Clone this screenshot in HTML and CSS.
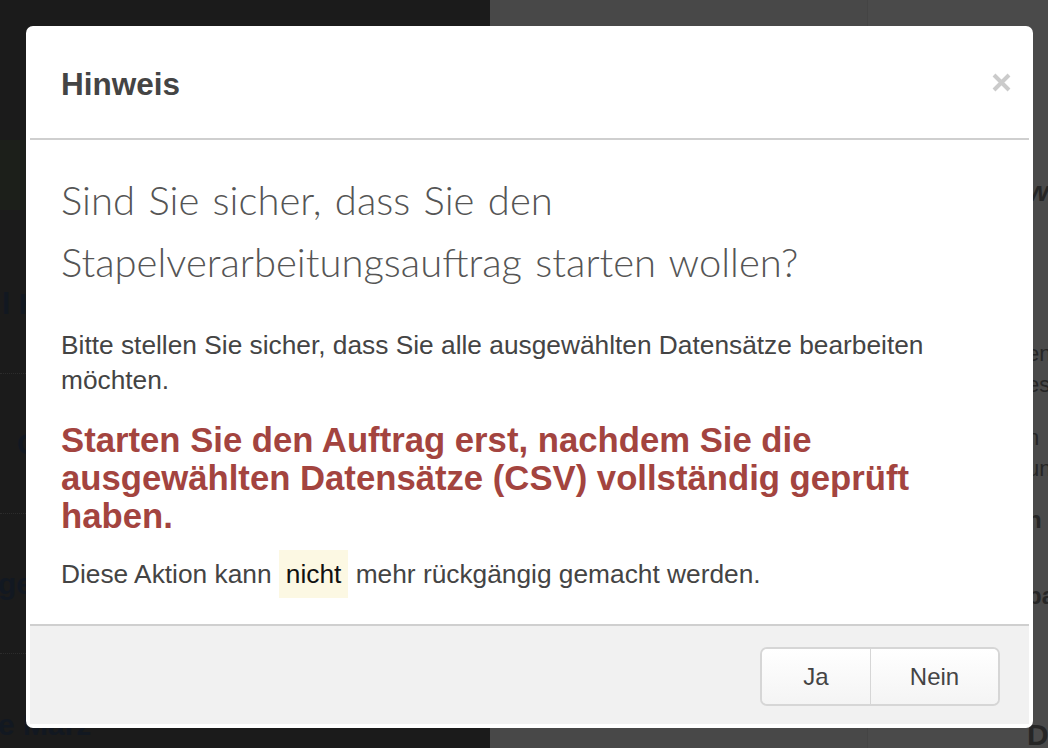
FILE: index.html
```html
<!DOCTYPE html>
<html lang="de">
<head>
    <meta charset="UTF-8">
    <meta name="viewport" content="width=device-width, initial-scale=1.0">
    <title>Hinweis</title>
    <link rel="stylesheet" href="styles.css">
</head>
<body>
    <div class="page">
        <div class="col-left">
            <div class="alert-strip"></div>
            <div class="list-row"><span class="shift-a">l Hinweise</span></div>
            <div class="list-row"><span class="shift-b">Gruppen</span></div>
            <div class="list-row"><span class="shift-c">gemeldet</span></div>
            <div class="list-row last"><span class="shift-c">e März</span></div>
        </div>
        <div class="col-mid"></div>
        <div class="col-right">
            <div class="side-title">wichtig</div>
            <div class="side-text">ende<br>estellt</div>
            <div class="side-text">n<br>und</div>
            <div class="side-bold">n l</div>
            <div class="side-bold tall">pa</div>
            <div class="side-big">Daten</div>
        </div>
    </div>

    <div class="backdrop">
        <div class="modal">
            <div class="modal-header">
                <h4 class="modal-title">Hinweis</h4>
                <button class="close" type="button" aria-label="Schließen">
                    <svg width="19" height="19" viewBox="0 0 19 19">
                        <path d="M2 2 L17 17 M17 2 L2 17" stroke="#cbcbcb" stroke-width="4"/>
                    </svg>
                </button>
            </div>
            <div class="modal-body">
                <h3 class="lead-question">Sind Sie sicher, dass Sie den Stapelverarbeitungsauftrag starten wollen?</h3>
                <p>Bitte stellen Sie sicher, dass Sie alle ausgewählten Datensätze bearbeiten möchten.</p>
                <p class="danger">Starten Sie den Auftrag erst, nachdem Sie die ausgewählten Datensätze (CSV) vollständig geprüft haben.</p>
                <p>Diese Aktion kann <mark>nicht</mark> mehr rückgängig gemacht werden.</p>
            </div>
            <div class="modal-footer">
                <div class="btn-group">
                    <button class="btn" type="button">Ja</button>
                    <button class="btn" type="button">Nein</button>
                </div>
            </div>
        </div>
    </div>
</body>
</html>
```

FILE: styles.css
```css
html, body {
    margin: 0;
    padding: 0;
    height: 100%;
    overflow: hidden;
}
body {
    font-family: "Liberation Sans", Arial, sans-serif;
    color: #444;
    background-color: #1b1b1b;
}

/* page behind the overlay */
.page {
    display: grid;
    grid-template-columns: 490px 377px 1fr;
    height: 748px;
}
.col-left {
    background-color: #1b1b1b;
    overflow: hidden;
    padding-top: 140px;
}
.alert-strip {
    height: 70px;
    background-color: #1c1f1a;
    margin-bottom: 24px;
}
.list-row {
    height: 139px;
    border-bottom: 1px dotted #2c2c2c;
    display: flex;
    align-items: center;
    font-size: 30px;
    font-weight: bold;
    color: #121821;
    white-space: nowrap;
}
.list-row.last {
    border-bottom: none;
    align-items: flex-start;
    padding-top: 54px;
}
.shift-a { margin-left: 2px; }
.shift-b { margin-left: 17px; }
.shift-c { margin-left: -2px; }
.col-mid {
    background-color: #484848;
}
.col-right {
    background-color: #4a4a4a;
    border-left: 1px solid #444;
    padding-left: 159px;
    padding-top: 176px;
    overflow: hidden;
    white-space: nowrap;
    color: #262626;
}
.side-title {
    font-size: 28px;
    font-weight: bold;
    font-style: italic;
    height: 162px;
}
.side-text {
    font-size: 22px;
    line-height: 31px;
    height: 84px;
}
.side-bold {
    font-size: 24px;
    font-weight: bold;
    height: 76px;
}
.side-bold.tall {
    height: 136px;
}
.side-big {
    font-size: 30px;
    font-weight: bold;
}

/* modal */
.backdrop {
    position: absolute;
    top: 0;
    left: 0;
    right: 0;
    bottom: 0;
}
.modal {
    position: absolute;
    top: 26px;
    left: 26px;
    width: 1007px;
    height: 702px;
    box-sizing: border-box;
    padding: 4px;
    background-color: #fff;
    border-radius: 7px;
    display: flex;
    flex-direction: column;
}
.modal-header {
    height: 108px;
    border-bottom: 2px solid #cfcfcf;
    display: flex;
    align-items: center;
    justify-content: space-between;
    padding: 0 18px 0 31px;
}
.modal-title {
    margin: 0;
    font-size: 31.5px;
    font-weight: bold;
    color: #444;
}
.close {
    border: none;
    background: none;
    padding: 0;
    width: 19px;
    height: 19px;
    cursor: pointer;
    margin-top: -4px;
}
.close svg {
    display: block;
}
.modal-body {
    flex: 1;
    padding: 29px 60px 0 31px;
}
.lead-question {
    margin: 0;
    font-family: Lato, "Liberation Sans", sans-serif;
    font-weight: 300;
    font-size: 40px;
    word-spacing: 2.5px;
    line-height: 62px;
    color: #555;
}
.modal-body p {
    margin: 35px 0 0 0;
    font-size: 26.3px;
    line-height: 35px;
}
.modal-body p.danger {
    margin-top: 23px;
    font-size: 34.7px;
    line-height: 38px;
    font-weight: bold;
    color: #a3443f;
}
.modal-body p.danger + p {
    margin-top: 22px;
}
mark {
    background-color: #fcf8e3;
    color: #111;
    padding: 9px 7px;
}
.modal-footer {
    height: 95px;
    border-top: 2px solid #cfcfcf;
    background-color: #f1f1f1;
    display: flex;
    align-items: center;
    justify-content: flex-end;
    padding: 3px 29px 0 0;
}
.btn-group {
    display: flex;
    border: 2px solid #d6d6d6;
    border-radius: 7px;
    overflow: hidden;
}
.btn {
    font-family: "Liberation Sans", Arial, sans-serif;
    font-size: 24px;
    color: #444;
    height: 55px;
    border: none;
    background: linear-gradient(#fff, #f4f4f4);
    cursor: pointer;
}
.btn + .btn {
    border-left: 1px solid #d6d6d6;
}
.btn:first-child {
    width: 108px;
}
.btn:last-child {
    width: 128px;
}
```
